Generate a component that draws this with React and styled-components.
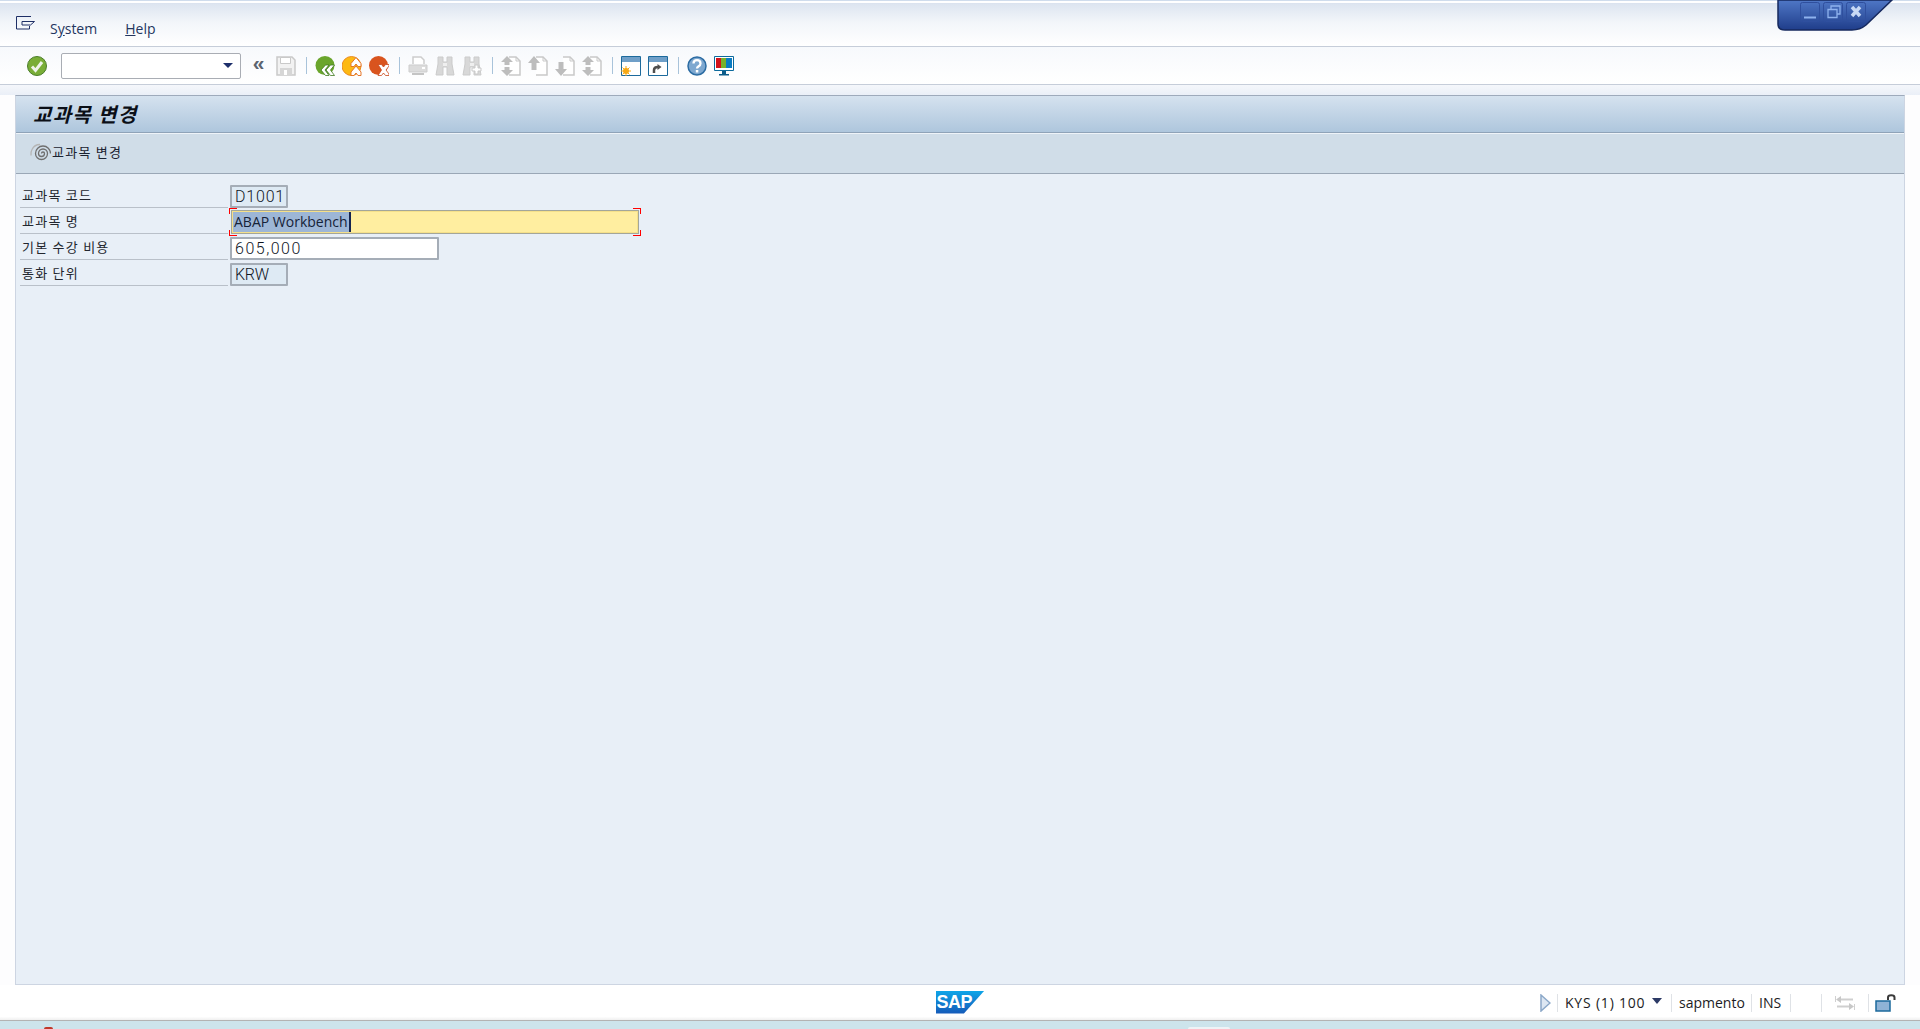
import React from 'react'
import styled, { createGlobalStyle } from 'styled-components'

const uiFont = `"Open Sans", "Noto Sans", "Noto Sans CJK KR", sans-serif`
const krFont = `"Noto Sans CJK KR", "Noto Sans", sans-serif`
const fixedFont = `Roboto, "Noto Sans CJK KR", sans-serif`

const GlobalStyle = createGlobalStyle`
    html, body { margin: 0; padding: 0; background: #fff; overflow: hidden; }
    * { box-sizing: border-box; }
`

const Shell = styled.div`
    position: relative;
    width: 1920px;
    height: 1029px;
    overflow: hidden;
    display: flex;
    flex-direction: column;
    background: #fdfdfe;
    font-family: ${uiFont};
    color: #1c2a4a;
`
const TopEdge = styled.div`
    height: 4px;
    flex: none;
    background: linear-gradient(#cfdcec 0, #cfdcec 1px, #fff 1px, #fff 3px, #dbe3ef 3px);
`
const MenuBar = styled.div`
    height: 43px;
    flex: none;
    display: flex;
    align-items: center;
    padding: 7px 0 0 16px;
    background: linear-gradient(#dde5f0 0, #f3f6fa 45%, #fff 100%);
    border-bottom: 1px solid #c6cdd9;
`
const MenuGlyphBox = styled.span`
    display: flex;
    margin-top: -11px;
`
const MenuItem = styled.span`
    font-size: 14px;
    color: #24365f;
    margin-left: ${props => props.$offset}px;
`
const Key = styled.span`
    text-decoration: underline;
`
const ToolBar = styled.div`
    height: 38px;
    flex: none;
    display: flex;
    align-items: center;
    gap: 7px;
    padding-left: 27px;
    background: linear-gradient(#f7f9fc, #fff);
    border-bottom: 1px solid #c6cdd9;
`
const Combo = styled.div`
    width: 180px;
    height: 26px;
    margin-left: 7px;
    flex: none;
    display: flex;
    align-items: center;
    justify-content: flex-end;
    padding-right: 7px;
    background: #fff;
    border: 1px solid #a9adb4;
    border-radius: 2px;
`
const DownArrow = styled.span`
    width: 0;
    height: 0;
    border-left: 5px solid transparent;
    border-right: 5px solid transparent;
    border-top: 5px solid #1d2f6b;
`
const Chevrons = styled.span`
    width: 11px;
    margin: -5px 5px 0;
    flex: none;
    font: bold 21px/20px "Liberation Sans", sans-serif;
    color: #5c6470;
    display: flex;
    justify-content: center;
`
const ToolSep = styled.span`
    width: 1px;
    height: 17px;
    flex: none;
    margin: 0 1px 0 3px;
    background: #a8c3da;
`
const Gap = styled.div`
    height: 10px;
    flex: none;
    background: linear-gradient(#f5f7fb, #eaeff7);
`
const Workspace = styled.main`
    flex: 1;
    margin: 0 15px 0 15px;
    display: flex;
    flex-direction: column;
    background: #e8eff7;
    border: 1px solid #cdd5e2;
    border-top: 1px solid #9eaabb;
    min-height: 0;
`
const TitleBar = styled.div`
    height: 37px;
    flex: none;
    display: flex;
    align-items: center;
    padding-left: 17px;
    background: linear-gradient(#d5e2ef, #aec6dd);
    border-bottom: 1px solid #8fa3b8;
`
const Title = styled.h1`
    margin: 0;
    font: italic 700 20px/1 ${krFont};
    letter-spacing: 1.3px;
    color: #0b0f17;
`
const AppBar = styled.div`
    height: 41px;
    flex: none;
    display: flex;
    align-items: center;
    padding: 0 0 4px 13px;
    gap: 1px;
    background: #d0dde8;
    border-top: 1px solid #eef3f8;
    border-bottom: 1px solid #9aa7b6;
`
const AppLabel = styled.span`
    font: 13px/1 ${krFont};
    letter-spacing: 1.25px;
    color: #1a2230;
`
const Form = styled.div`
    padding: 8px 0 0 4px;
    display: flex;
    flex-direction: column;
`
const Row = styled.div`
    height: 26px;
    display: flex;
    align-items: flex-end;
`
const Label = styled.label`
    width: 208px;
    height: 26px;
    flex: none;
    display: flex;
    align-items: center;
    padding: 0 0 0 2px;
    font: 13px/1 ${krFont};
    letter-spacing: 1.25px;
    color: #22262e;
    border-bottom: 1px solid #b9c0c9;
`
const Field = styled.div`
    width: ${props => props.$width}px;
    height: 23px;
    margin-left: 2px;
    flex: none;
    display: flex;
    align-items: center;
    padding-left: 3px;
    font: 300 16px/1 ${fixedFont};
    letter-spacing: ${props => props.$spacing}px;
    color: #10161f;
    background: ${props => (props.$readOnly ? '#deeaf4' : '#fff')};
    border: 2px solid #a5adb7;
    border-radius: 1px;
`
const FocusField = styled.div`
    position: relative;
    width: 408px;
    height: 24px;
    margin-left: 3px;
    flex: none;
    display: flex;
    align-items: center;
    padding-left: 1px;
    font: 14px/20px ${uiFont};
    color: #152238;
    background: #ffeea0;
    border: 1px solid #a3a69a;
    box-shadow: inset 0 0 0 1px #f5e08a;
`
const Selected = styled.span`
    background: #9db6d6;
    padding: 0 1px;
    border-right: 2px solid #15244f;
`
const Corner = styled.i`
    position: absolute;
    width: 8px;
    height: 6px;
    border: 0 solid #f00;
    ${props => (props.$top ? 'top: -3px; border-top-width: 1px;' : 'bottom: -3px; border-bottom-width: 1px;')}
    ${props => (props.$left ? 'left: -3px; border-left-width: 1px;' : 'right: -3px; border-right-width: 1px;')}
`
const StatusBar = styled.footer`
    height: 35px;
    flex: none;
    display: grid;
    grid-template-columns: 1fr auto 1fr;
    align-items: center;
    background: linear-gradient(#fff 90%, #f0f0f0);
`
const SapLogo = styled.div`
    grid-column: 2;
    width: 49px;
    height: 23px;
    margin-top: -1px;
    display: flex;
    align-items: center;
    padding-left: 1px;
    clip-path: polygon(0 0, 100% 0, 58% 100%, 0 100%);
    background: linear-gradient(#0ea5e8, #1559b8);
    color: #fff;
    font: 700 18px/1 "Liberation Sans", sans-serif;
    letter-spacing: -0.5px;
`
const StatusRight = styled.div`
    grid-column: 3;
    display: flex;
    align-items: center;
    justify-content: flex-end;
    padding-right: 24px;
    height: 100%;
`
const StatusText = styled.span`
    font-size: 14px;
    color: #1c1c24;
    width: ${props => props.$width}px;
    padding-left: 7px;
    letter-spacing: ${props => props.$spacing || 0}px;
    display: flex;
    align-items: center;
    gap: 7px;
`
const StatusSep = styled.span`
    width: 1px;
    height: 18px;
    flex: none;
    background: #dfe2e6;
`
const StatusArrow = styled.span`
    width: 0;
    height: 0;
    margin-top: -3px;
    border-left: 5px solid transparent;
    border-right: 5px solid transparent;
    border-top: 6px solid #2c3a66;
`
const StatusSlot = styled.span`
    width: ${props => props.$width}px;
    flex: none;
    display: flex;
    justify-content: ${props => props.$justify || 'center'};
`
const TaskStrip = styled.div`
    position: relative;
    height: 9px;
    flex: none;
    background: #cde4ec;
    border-top: 1px solid #b3b3b3;
`
const TaskMark = styled.i`
    position: absolute;
    left: ${props => props.$left}px;
    width: ${props => props.$width}px;
    bottom: 0;
    height: 2px;
    background: ${props => props.$color};
    border-radius: 2px 2px 0 0;
`
const WindowControls = styled.svg`
    position: absolute;
    top: 0;
    left: 1774px;
`
const IconSvg = styled.svg`
    flex: none;
`

const Svg = ({ children, w = 20, h = 20 }) => (
    <IconSvg width={w} height={h} viewBox={`0 0 ${w} ${h}`}>{children}</IconSvg>
)

const CheckIcon = () => (
    <Svg>
        <circle cx="10" cy="10" r="9.5" fill="#79ad37" stroke="#4a7d2a" />
        <path d="M5 10.500l3.500 4L15 6" fill="none" stroke="#eef3ea" strokeWidth="3" />
    </Svg>
)
const SaveIcon = () => (
    <Svg>
        <path d="M1 1h15l3 3v15H1z" fill="#f2f2f2" stroke="#c9c9c9" strokeWidth="1.5" />
        <path d="M4.500 1.500h10v6h-10z" fill="#fff" stroke="#c9c9c9" />
        <path d="M4 12h12v7H4z" fill="#d6d6d6" />
        <path d="M8 14h3v5H8z" fill="#fff" />
    </Svg>
)
const BackIcon = () => (
    <Svg>
        <circle cx="10" cy="9.500" r="9.500" fill="#6aa52c" />
        <path d="M10.500 9l-4.500 5 4.500 5.500h3.500l-4-5.500 4-5z" fill="#fff" stroke="#3f7a1e" strokeWidth=".8" />
        <path d="M15.500 9l-4.500 5 4.500 5.500h4l-4-5.500 4-5z" fill="#fff" stroke="#3f7a1e" strokeWidth=".8" />
    </Svg>
)
const ExitIcon = () => (
    <Svg>
        <circle cx="9.500" cy="10" r="9.500" fill="#fdb913" stroke="#ea8a1e" />
        <path d="M14 1.500l5 6v3h-3L14 8l-2 2.500H9v-3z" fill="#fff" stroke="#e5762a" />
        <path d="M14 10l5 6v3.500h-3L14 17l-2 2.500H9V16z" fill="#fff" stroke="#e5762a" />
    </Svg>
)
const CancelIcon = () => (
    <Svg>
        <circle cx="9.500" cy="9.500" r="9.500" fill="#d9541e" />
        <path d="M9 8.500h3.500l2 2.500 2-2.500H20v1.500l-3 4 3 4v1.500h-3.500l-2-2.500-2 2.500H9l3.500-5.500z" fill="#fff" stroke="#c9481a" strokeWidth=".8" />
    </Svg>
)
const PrintIcon = () => (
    <Svg>
        <path d="M5 8V1h8l3 3v4" fill="#fff" stroke="#cdcdcd" strokeWidth="1.500" />
        <path d="M1 9h18v7H1z" fill="#dcdcdc" stroke="#cdcdcd" />
        <path d="M4 18h12" stroke="#c4c4c4" strokeWidth="2" />
        <path d="M14 11h3v2h-3z" fill="#fff" />
    </Svg>
)
const BinocIcon = ({ plus }) => (
    <Svg>
        <path d="M3 1h5v5h4V1h5v7l2 11h-7v-8H8v8H1l2-11z" fill="#d8d8d8" stroke="#cbcbcb" />
        <path d="M8 7h4v3H8z" fill="#efefef" />
        {plus && <path d="M13 9h3v3h3v3h-3v3h-3v-3h-3v-3h3z" fill="#fff" stroke="#c9c9c9" />}
    </Svg>
)
const PageArrows = ({ up, down, single }) => (
    <Svg>
        <path d="M8 1h7l4 4v14H8" fill="#fff" stroke="#c9c9c9" strokeWidth="1.500" />
        <path d="M15 1v4h4" fill="none" stroke="#c9c9c9" />
        {up && <path d={single ? 'M0 7l6-7 6 7H8.500v7h-5V7z' : 'M0 6l6-6 6 6H8.500v3h-5V6z'} fill="#bdbdbd" />}
        {down && <path d={single ? 'M0 13h3.500V6h5v7H12l-6 7z' : 'M0 14h3.500v-3h5v3H12l-6 6z'} fill="#bdbdbd" />}
    </Svg>
)
const NewSessionIcon = () => (
    <Svg>
        <path d="M.5.500h19v19H.5z" fill="#fff" stroke="#1c6a9c" />
        <path d="M1 1h18v5H1z" fill="#6f9fc8" />
        <circle cx="5" cy="15" r="3" fill="#f7a814" />
        <path d="M5 10v10M0 15h10M1.500 11.500l7 7M8.500 11.500l-7 7" stroke="#f7a814" />
    </Svg>
)
const ShortcutIcon = () => (
    <Svg>
        <path d="M.5.500h19v19H.5z" fill="#fff" stroke="#1c6a9c" />
        <path d="M1 1h18v5H1z" fill="#6f9fc8" />
        <path d="M6 17v-3c0-2 1-3 4-3" fill="none" stroke="#4f4f4f" strokeWidth="2.500" />
        <path d="M9.500 8l4 3-4 3z" fill="#4f4f4f" />
    </Svg>
)
const HelpIcon = () => (
    <Svg>
        <circle cx="10" cy="10" r="9" fill="#7ea8d0" stroke="#2c6ca3" strokeWidth="1.500" />
        <path d="M6.500 7.500c0-4.500 7-4.500 7 0 0 3-3.500 2.500-3.500 5" fill="none" stroke="#fff" strokeWidth="2.300" />
        <path d="M8.800 14h2.500v2.500H8.800z" fill="#fff" />
    </Svg>
)
const MonitorIcon = () => (
    <Svg>
        <path d="M.5.500h19v14H.5z" fill="#fff" stroke="#0d6a9c" />
        <path d="M2 2h5v10H2z" fill="#d3121b" />
        <path d="M7 2h5v10H7z" fill="#79b12c" />
        <path d="M12 2h6v10h-6z" fill="#0b7cc2" />
        <path d="M8 15h4v3H8zM5 18h10v1.500H5z" fill="#0d5c8a" />
    </Svg>
)
const MenuGlyph = () => (
    <Svg w={19} h={14}>
        <path d="M15 .500H.500v12.500H13.500v-3M6 5.500h12.500L14.500 9H6z" fill="none" stroke="#1e2f66" />
    </Svg>
)
const SpiralIcon = () => (
    <Svg w={22} h={22}>
        <g transform="translate(0.500 1.500)">
            <path d="M12 11a1.500 1.500 0 0 1 3 0a3 3 0 0 1-6 0a4.500 4.500 0 0 1 9 0a6 6 0 0 1-12 0a7.500 7.500 0 0 1 15 0" fill="none" stroke="#6f6f6f" strokeWidth="1.300" />
            <path d="M1.500 13a9 9 0 0 1 1-6a9 9 0 0 1 8-5" fill="none" stroke="#b5b5b5" strokeWidth="1.300" />
        </g>
    </Svg>
)
const PlayIcon = () => (
    <Svg w={11} h={18}>
        <path d="M1 1l9 8-9 8z" fill="#dce6f2" stroke="#8aa7c8" strokeWidth="1.500" />
    </Svg>
)
const TransferIcon = () => (
    <Svg w={20} h={14}>
        <path d="M.500 0v6M19.500 8v6" stroke="#d0d0d0" />
        <path d="M3 3.500h15M2 10.500h15" stroke="#cfcfcf" strokeWidth="2" />
        <path d="M6 0L1 3.500 6 7zM14 7l5 3.500-5 3.500z" fill="#c8c8c8" />
    </Svg>
)
const LockIcon = () => (
    <Svg w={21} h={18}>
        <path d="M13 6V3.500C13 .500 19.500 .500 19.500 3.500V6" fill="none" stroke="#3a3a3a" strokeWidth="2" />
        <path d="M1 7h14v10H1z" fill="#8fb3d6" stroke="#1c6a9c" strokeWidth="1.500" />
    </Svg>
)

const App = () => (
    <Shell>
        <GlobalStyle />
        <TopEdge />
        <MenuBar>
            <MenuGlyphBox><MenuGlyph /></MenuGlyphBox>
            <MenuItem $offset={15}>S<Key>y</Key>stem</MenuItem>
            <MenuItem $offset={28}><Key>H</Key>elp</MenuItem>
        </MenuBar>
        <ToolBar>
            <CheckIcon />
            <Combo><DownArrow /></Combo>
            <Chevrons>«</Chevrons>
            <SaveIcon />
            <ToolSep />
            <BackIcon />
            <ExitIcon />
            <CancelIcon />
            <ToolSep />
            <PrintIcon />
            <BinocIcon />
            <BinocIcon plus />
            <ToolSep />
            <PageArrows up down />
            <PageArrows up single />
            <PageArrows down single />
            <PageArrows up down />
            <ToolSep />
            <NewSessionIcon />
            <ShortcutIcon />
            <ToolSep />
            <HelpIcon />
            <MonitorIcon />
        </ToolBar>
        <Gap />
        <Workspace>
            <TitleBar><Title>교과목 변경</Title></TitleBar>
            <AppBar>
                <SpiralIcon />
                <AppLabel>교과목 변경</AppLabel>
            </AppBar>
            <Form>
                <Row>
                    <Label>교과목 코드</Label>
                    <Field $width={58} $spacing={0.8} $readOnly>D1001</Field>
                </Row>
                <Row>
                    <Label>교과목 명</Label>
                    <FocusField>
                        <Corner $top $left />
                        <Corner $top />
                        <Corner $left />
                        <Corner />
                        <Selected>ABAP Workbench</Selected>
                    </FocusField>
                </Row>
                <Row>
                    <Label>기본 수강 비용</Label>
                    <Field $width={209} $spacing={1.5}>605,000</Field>
                </Row>
                <Row>
                    <Label>통화 단위</Label>
                    <Field $width={58} $spacing={-0.3} $readOnly>KRW</Field>
                </Row>
            </Form>
        </Workspace>
        <StatusBar>
            <SapLogo>SAP</SapLogo>
            <StatusRight>
                <StatusSlot $width={17} $justify="flex-start"><PlayIcon /></StatusSlot>
                <StatusSep />
                <StatusText $width={113} $spacing={0.8}>KYS (1) 100 <StatusArrow /></StatusText>
                <StatusSep />
                <StatusText $width={79}>sapmento</StatusText>
                <StatusSep />
                <StatusText $width={38}>INS</StatusText>
                <StatusSep />
                <StatusSlot $width={30} />
                <StatusSep />
                <StatusSlot $width={46}><TransferIcon /></StatusSlot>
                <StatusSep />
                <StatusSlot $width={27} $justify="flex-end"><LockIcon /></StatusSlot>
            </StatusRight>
        </StatusBar>
        <TaskStrip>
            <TaskMark $left={44} $width={9} $color="#c0392b" />
            <TaskMark $left={1188} $width={42} $color="#eef3f6" />
        </TaskStrip>
        <WindowControls width="125" height="32" viewBox="0 0 125 32">
            <defs>
                <linearGradient id="capGrad" x1="0" y1="0" x2="0" y2="1">
                    <stop offset="0" stopColor="#4f77c6" />
                    <stop offset="1" stopColor="#1f3d8a" />
                </linearGradient>
            </defs>
            <path d="M4 0 L4 24 Q4 30 11 30 L78 30 Q86 30 92 25 L118 0 Z" fill="url(#capGrad)" stroke="#16295e" strokeWidth="1.500" />
            <g fill="none" stroke="#2f4f9e">
                <rect x="26.500" y="2.500" width="19" height="19" rx="2" />
                <rect x="49.500" y="2.500" width="19" height="19" rx="2" />
                <rect x="72.500" y="2.500" width="19" height="19" rx="2" />
            </g>
            <path d="M30 17.500h12" stroke="#8fb2ee" strokeWidth="2" />
            <path d="M54 9.500h9v8h-9zM57 9V6h9v8h-3" fill="none" stroke="#8fb2ee" strokeWidth="1.300" />
            <path d="M78 7l8 9M86 7l-8 9" stroke="#c8d9f5" strokeWidth="3.500" />
        </WindowControls>
    </Shell>
)

export default App
